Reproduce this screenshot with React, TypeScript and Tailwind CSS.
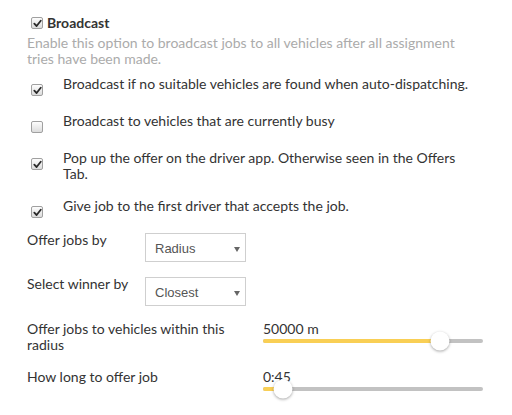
import React from "react";

function Check({ checked }: { checked: boolean }) {
  return (
    <span className="inline-flex w-[12px] h-[12px] shrink-0 items-center justify-center rounded-[2px] border border-[#a0a0a0] bg-gradient-to-b from-[#fdfdfd] to-[#dcdcdc]">
      {checked && (
        <svg viewBox="0 0 10 10" className="w-[9px] h-[9px]">
          <path d="M1.5 5.2 L4 7.8 L8.6 2" stroke="#2a2a2a" strokeWidth="2" fill="none" strokeLinecap="round" strokeLinejoin="round" />
        </svg>
      )}
    </span>
  );
}

function CheckRow({ checked, children }: { checked: boolean; children: React.ReactNode }) {
  return (
    <div className="flex items-start min-h-[37px] py-[8px]">
      <div className="w-[36px] shrink-0 pl-[4px] pt-[8px] flex">
        <Check checked={checked} />
      </div>
      <div className="flex-1">{children}</div>
    </div>
  );
}

function Select({ value }: { value: string }) {
  return (
    <div className="flex items-start w-[101px] h-[29px] mt-[1px] border border-[#cfcfcf] bg-white pl-[9px] pr-[5px] pt-[7px] font-['Liberation_Sans',Arial,sans-serif] text-[13px] leading-[15px] text-[#555]">
      <span>{value}</span>
      <svg viewBox="0 0 6 5" className="ml-auto mt-[6px] w-[6px] h-[5px]">
        <path d="M0 0 H6 L3 5 Z" fill="#666" />
      </svg>
    </div>
  );
}

function Slider({ value, pct }: { value: string; pct: number }) {
  return (
    <div className="w-[220px]">
      <div>{value}</div>
      <div className="relative mt-[2px] h-[4px] rounded-full bg-[#c2c2c2]">
        <div className="h-full rounded-full bg-[#f9cf55]" style={{ width: `${pct}%` }} />
        <div
          className="absolute top-1/2 w-[19px] h-[19px] -translate-x-1/2 -translate-y-1/2 rounded-full bg-white shadow-[0_1px_3px_rgba(0,0,0,0.35)]"
          style={{ left: `${pct}%` }}
        />
      </div>
    </div>
  );
}

export default function App() {
  return (
    <div className="w-[512px] h-[415px] overflow-hidden bg-white pl-[27px] pr-[29px] pt-[15px] font-['Lato',sans-serif] text-[14px] leading-[16px] text-[#333]">
      <div className="flex items-start">
        <div className="pl-[4px] pr-[4px] pt-[2px] flex">
          <Check checked />
        </div>
        <span className="font-bold">Broadcast</span>
      </div>
      <p className="mt-[4px] text-[#ababab]">
        Enable this option to broadcast jobs to all vehicles after all assignment tries have been made.
      </p>
      <div className="mt-[1px]">
        <CheckRow checked>Broadcast if no suitable vehicles are found when auto-dispatching.</CheckRow>
        <CheckRow checked={false}>Broadcast to vehicles that are currently busy</CheckRow>
        <CheckRow checked>Pop up the offer on the driver app. Otherwise seen in the Offers Tab.</CheckRow>
        <CheckRow checked>Give job to the first driver that accepts the job.</CheckRow>
      </div>
      <div className="mt-[5px] flex items-start h-[44px]">
        <div className="w-[118px] shrink-0">Offer jobs by</div>
        <Select value="Radius" />
      </div>
      <div className="flex items-start h-[45px]">
        <div className="w-[118px] shrink-0">Select winner by</div>
        <Select value="Closest" />
      </div>
      <div className="flex items-start h-[48px]">
        <div className="w-[236px] shrink-0 pr-[10px]">Offer jobs to vehicles within this radius</div>
        <Slider value="50000 m" pct={80.5} />
      </div>
      <div className="flex items-start">
        <div className="w-[236px] shrink-0">How long to offer job</div>
        <Slider value="0:45" pct={9} />
      </div>
    </div>
  );
}
